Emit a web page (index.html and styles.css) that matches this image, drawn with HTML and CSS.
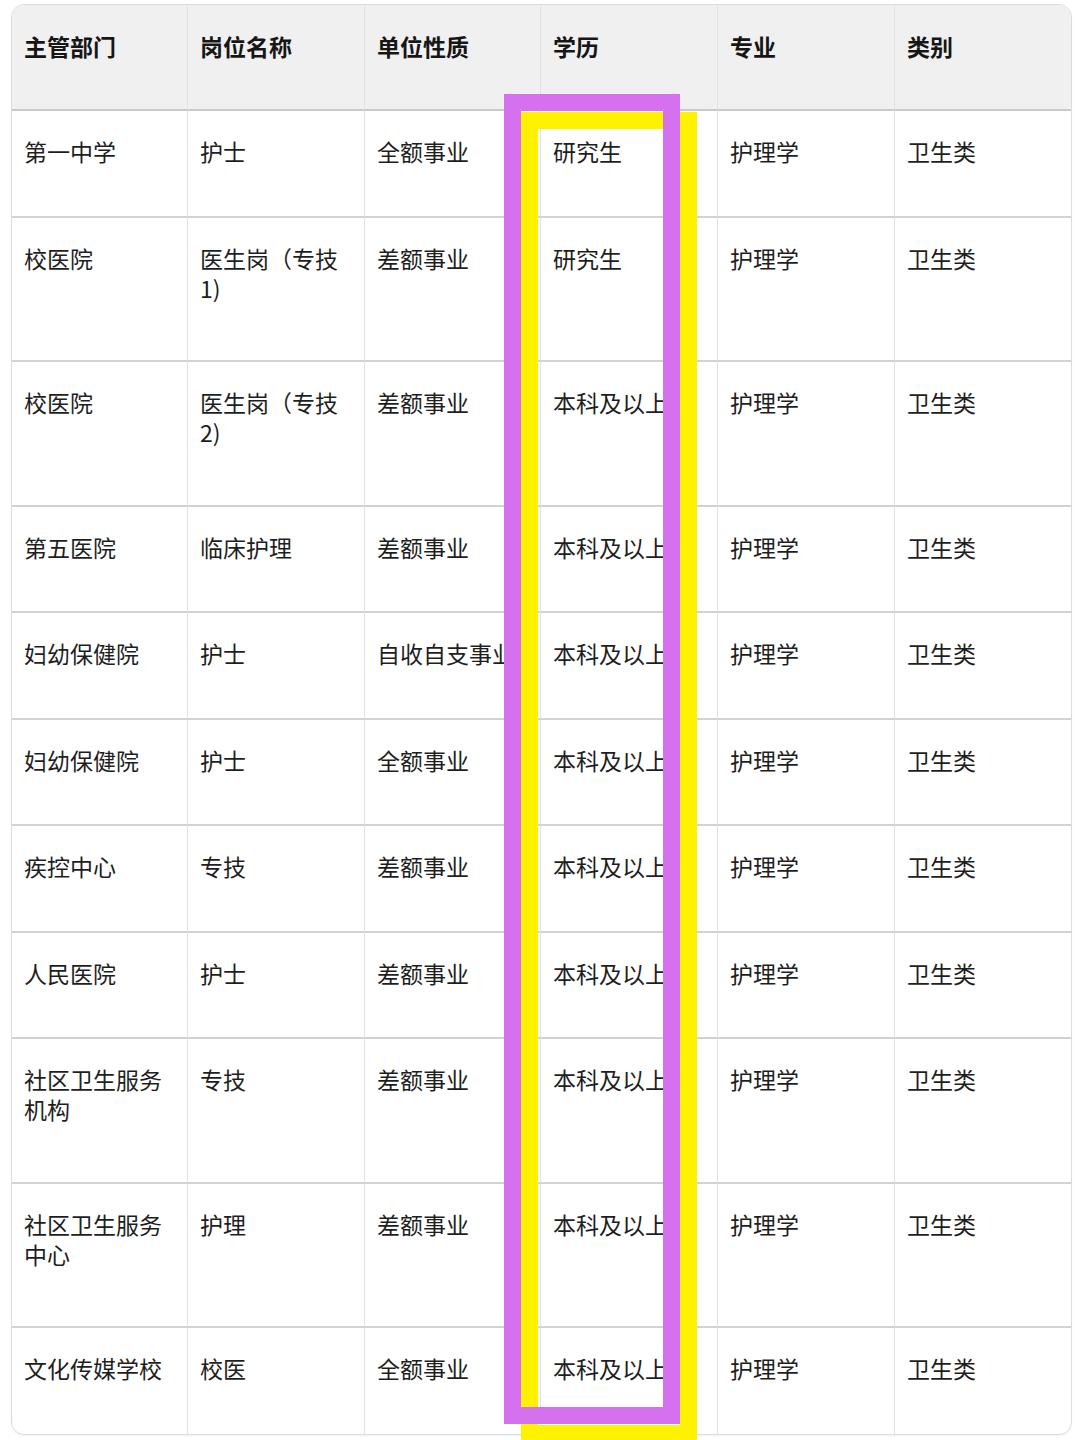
FILE: index.html
```html
<!DOCTYPE html>
<html lang="zh-CN">
<head>
<meta charset="utf-8">
<title>岗位表</title>
<link rel="stylesheet" href="styles.css">
</head>
<body>
<div class="page">
  <div class="table-wrap">
    <table class="jobs">
      <colgroup>
        <col class="c1"><col class="c2"><col class="c3"><col class="c4"><col class="c5"><col class="c6">
      </colgroup>
      <thead>
        <tr class="h106"><th>主管部门</th><th>岗位名称</th><th>单位性质</th><th>学历</th><th>专业</th><th>类别</th></tr>
      </thead>
      <tbody>
        <tr class="h107"><td>第一中学</td><td>护士</td><td>全额事业</td><td>研究生</td><td>护理学</td><td>卫生类</td></tr>
        <tr class="h144"><td>校医院</td><td>医生岗（专技1)</td><td>差额事业</td><td>研究生</td><td>护理学</td><td>卫生类</td></tr>
        <tr class="h145"><td>校医院</td><td>医生岗（专技2)</td><td>差额事业</td><td>本科及以上</td><td>护理学</td><td>卫生类</td></tr>
        <tr class="h106"><td>第五医院</td><td>临床护理</td><td>差额事业</td><td>本科及以上</td><td>护理学</td><td>卫生类</td></tr>
        <tr class="h107"><td>妇幼保健院</td><td>护士</td><td>自收自支事业</td><td>本科及以上</td><td>护理学</td><td>卫生类</td></tr>
        <tr class="h106"><td>妇幼保健院</td><td>护士</td><td>全额事业</td><td>本科及以上</td><td>护理学</td><td>卫生类</td></tr>
        <tr class="h107"><td>疾控中心</td><td>专技</td><td>差额事业</td><td>本科及以上</td><td>护理学</td><td>卫生类</td></tr>
        <tr class="h106"><td>人民医院</td><td>护士</td><td>差额事业</td><td>本科及以上</td><td>护理学</td><td>卫生类</td></tr>
        <tr class="h145"><td>社区卫生服务机构</td><td>专技</td><td>差额事业</td><td>本科及以上</td><td>护理学</td><td>卫生类</td></tr>
        <tr class="h144"><td>社区卫生服务中心</td><td>护理</td><td>差额事业</td><td>本科及以上</td><td>护理学</td><td>卫生类</td></tr>
        <tr class="h106 last"><td>文化传媒学校</td><td>校医</td><td>全额事业</td><td>本科及以上</td><td>护理学</td><td>卫生类</td></tr>
      </tbody>
    </table>
  </div>
  <div class="mark mark-yellow"></div>
  <div class="mark mark-purple"></div>
</div>
</body>
</html>
```

FILE: styles.css
```css
html, body {
  margin: 0;
  padding: 0;
  background: #ffffff;
}

body {
  font-family: "Noto Sans CJK SC", "Noto Sans", sans-serif;
  color: #1c1c1c;
  width: 1080px;
  height: 1440px;
  overflow: hidden;
}

.page {
  position: relative;
  width: 1080px;
  height: 1440px;
  padding: 4px 0 0 11px;
  box-sizing: border-box;
}

.table-wrap {
  width: 1061px;
  border: 1px solid #dcdcdc;
  border-radius: 13px;
  overflow: hidden;
  box-sizing: border-box;
  box-shadow: 0 1px 2px rgba(0, 0, 0, 0.06);
}

.jobs {
  width: 100%;
  border-collapse: separate;
  border-spacing: 0;
  table-layout: fixed;
}

.c1 { width: 176px; }
.c2 { width: 177px; }
.c3 { width: 176px; }
.c4 { width: 177px; }
.c5 { width: 177px; }
.c6 { width: auto; }

.jobs th,
.jobs td {
  box-sizing: border-box;
  vertical-align: top;
  text-align: left;
  padding: 25px 12px 0 12px;
  font-size: 23px;
  line-height: 30px;
  border-right: 1px solid #e2e2e2;
  border-bottom: 2px solid #d2d2d2;
  word-break: break-all;
}

.jobs th:last-child,
.jobs td:last-child {
  border-right: none;
}

.jobs th {
  padding-top: 26px;
  background: #f0f0f0;
  font-weight: 700;
  color: #161616;
  border-bottom: 2px solid #c9c9c9;
}

.jobs td {
  font-weight: 400;
  color: #1e1e1e;
}

.jobs tr.last td {
  border-bottom: none;
}

.h106 { height: 106px; }
.h107 { height: 107px; }
.h144 { height: 144px; }
.h145 { height: 145px; }

.mark {
  position: absolute;
  box-sizing: border-box;
  width: 176px;
}

.mark-yellow {
  left: 521px;
  top: 112px;
  height: 1330px;
  border: 17px solid #fff200;
}

.mark-purple {
  left: 504px;
  top: 94px;
  height: 1330px;
  border: 17px solid #d570ee;
}
```
